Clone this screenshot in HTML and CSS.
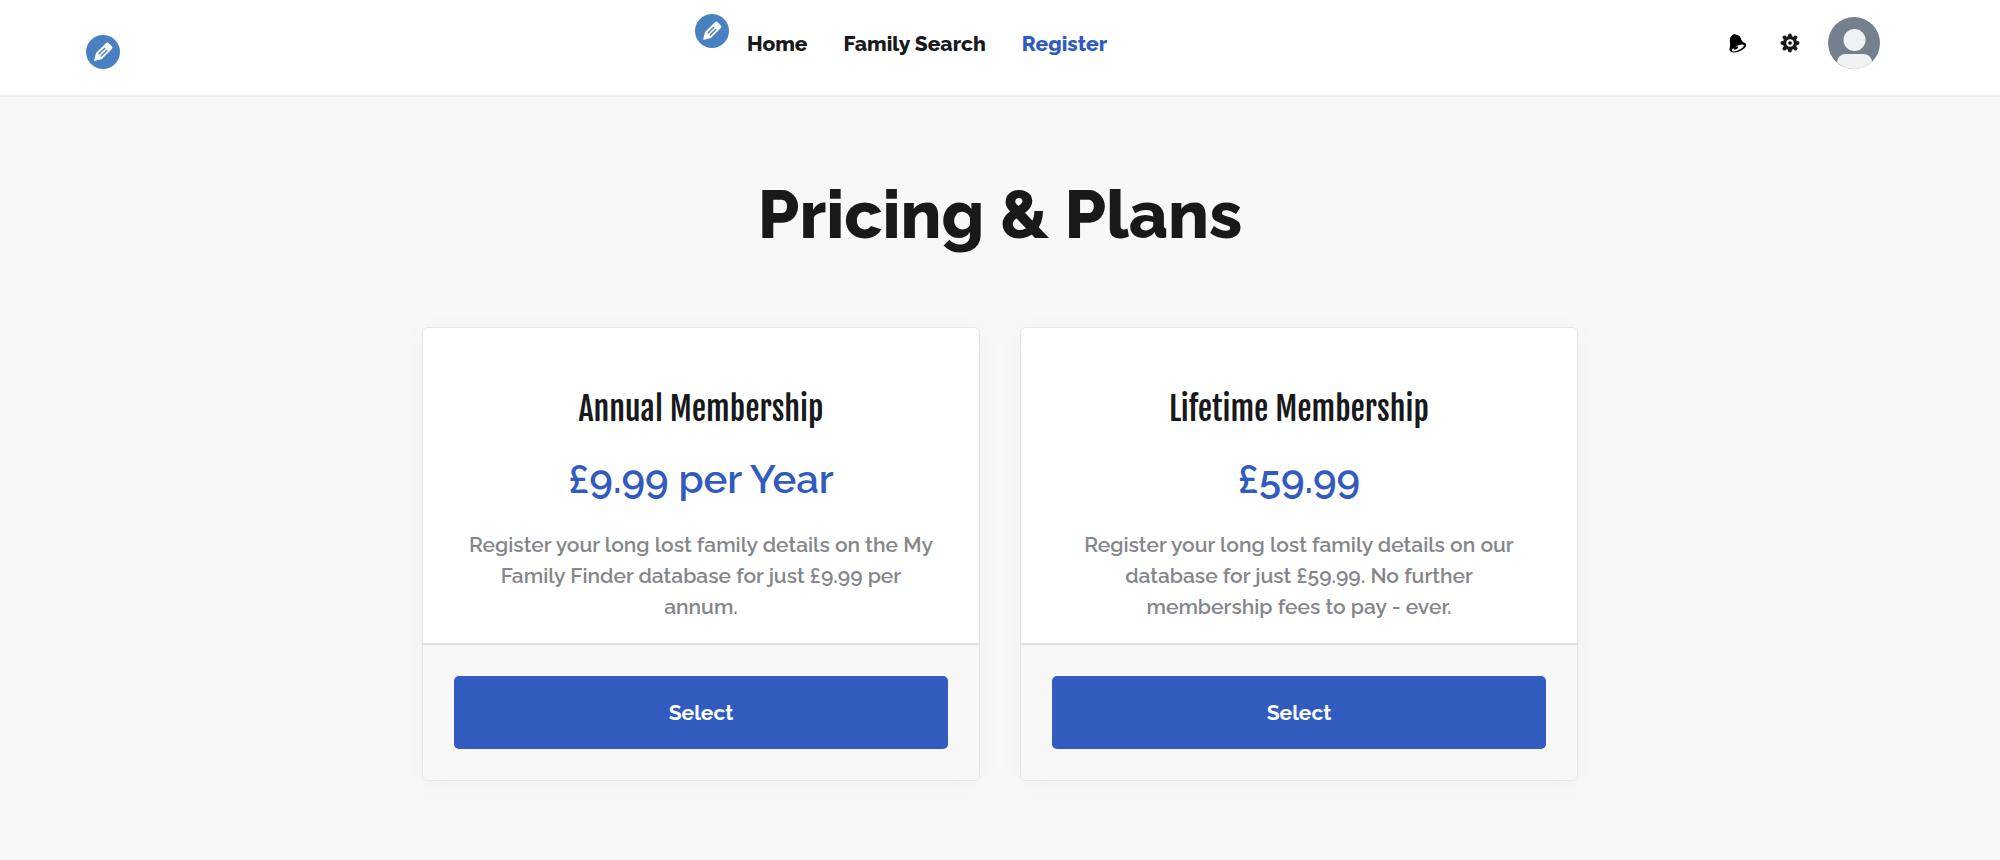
FILE: index.html
```html
<!DOCTYPE html>
<html lang="en">

<head>
    <meta charset="utf-8">
    <meta name="viewport" content="width=device-width, initial-scale=1.0">
    <title>Pricing &amp; Plans</title>
    <link rel="stylesheet" href="styles.css">
</head>

<body>

    <header class="topbar">
        <button class="edit edit-logo" type="button" aria-label="Edit logo">
            <svg viewBox="0 0 34 34">
                <circle cx="17" cy="17" r="17" />
                <g transform="translate(8 26) rotate(-45)">
                    <path class="pen" d="M0 0 L7 -4.2 H21 Q23 -4.2 23 -2.2 V2.2 Q23 4.2 21 4.2 H7 Z" />
                    <path class="line" d="M8 -1.4 H17 M8 1.6 H17" />
                </g>
            </svg>
        </button>

        <nav class="menu">
            <button class="edit edit-menu" type="button" aria-label="Edit menu">
                <svg viewBox="0 0 34 34">
                    <circle cx="17" cy="17" r="17" />
                    <g transform="translate(8 26) rotate(-45)">
                        <path class="pen" d="M0 0 L7 -4.2 H21 Q23 -4.2 23 -2.2 V2.2 Q23 4.2 21 4.2 H7 Z" />
                        <path class="line" d="M8 -1.4 H17 M8 1.6 H17" />
                    </g>
                </svg>
            </button>
            <a href="#">Home</a>
            <a href="#">Family Search</a>
            <a class="active" href="#">Register</a>
        </nav>

        <div class="account">
            <button class="icon" type="button" aria-label="Notifications">
                <svg viewBox="0 0 20 20">
                    <path d="M5 1.4 Q6 .4 7.4 1.4 C11 1.6 12.6 4 13.6 7 Q14.6 9.6 17.6 10.6 Q19.2 12.6 16.4 15.2 C12.6 18.8 6 20.6 2.6 18.6 Q.8 17.2 1.8 14.4 C2.6 11.4 1.4 8.6 2 5.6 Q2.6 2.8 5 1.4 Z" />
                    <ellipse class="hole" cx="9.8" cy="15" rx="6.6" ry="2.3" transform="rotate(-24 9.8 15)" />
                    <ellipse cx="7.8" cy="15" rx="2.6" ry="1.3" transform="rotate(-24 7.8 15)" />
                </svg>
            </button>
            <button class="icon" type="button" aria-label="Settings">
                <svg viewBox="0 0 20 20">
                    <circle class="ring" cx="10" cy="10" r="5.4" />
                    <circle cx="10" cy="10" r="1.8" />
                    <path class="teeth" d="M10 3.4 V2.4 M10 16.6 V17.6 M3.4 10 H2.4 M16.6 10 H17.6 M5.2 5.2 L4.4 4.4 M14.8 5.2 L15.6 4.4 M5.2 14.8 L4.4 15.6 M14.8 14.8 L15.6 15.6" />
                </svg>
            </button>
            <button class="avatar" type="button" aria-label="My account">
                <svg viewBox="0 0 52 52">
                    <circle class="back" cx="26" cy="26" r="26" />
                    <circle class="person" cx="26.5" cy="23" r="11" />
                    <path class="person" d="M9 45.5 Q10 37 18 37 H35 Q43 37 44 45 A26 26 0 0 1 9 45.5 Z" />
                </svg>
            </button>
        </div>
    </header>

    <main class="pricing">
        <h1>Pricing &amp; Plans</h1>

        <section class="plans">
            <article class="plan">
                <div class="plan-body">
                    <h2>Annual Membership</h2>
                    <p class="price">£9.99 per Year</p>
                    <p class="text">Register your long lost family details on the My Family Finder database for just £9.99 per annum.</p>
                </div>
                <div class="plan-footer">
                    <button class="select" type="button">Select</button>
                </div>
            </article>

            <article class="plan">
                <div class="plan-body">
                    <h2>Lifetime Membership</h2>
                    <p class="price">£59.99</p>
                    <p class="text">Register your long lost family details on our database for just £59.99. No further membership fees to pay - ever.</p>
                </div>
                <div class="plan-footer">
                    <button class="select" type="button">Select</button>
                </div>
            </article>
        </section>
    </main>

</body>

</html>
```
FILE: styles.css
```css
* {
    box-sizing: border-box;
}

body {
    margin: 0;
    font-family: Raleway, 'Lato', sans-serif;
    color: #18191b;
    background-color: #f8f8fa;
}

button {
    font-family: inherit;
    border: none;
    padding: 0;
    background: none;
    cursor: pointer;
}

svg {
    display: block;
    width: 100%;
}

/* top bar */
.topbar {
    display: flex;
    justify-content: space-between;
    align-items: center;
    min-height: 97px;
    padding: 14px 120px 23px 86px;
    background-color: #fff;
    border-bottom: 2px solid #efeff2;
}

.edit {
    width: 34px;
    fill: #4880c2;
}

.edit .pen {
    fill: #fff;
}

.edit .line {
    fill: none;
    stroke: #4880c2;
    stroke-width: 1.4;
}

.edit-logo {
    margin-top: 18px;
}

.menu {
    display: flex;
    align-items: center;
}

.edit-menu {
    margin-bottom: 24px;
}

.menu a {
    padding: 0 18px;
    font-size: 21px;
    font-weight: 800;
    color: #18191b;
    text-decoration: none;
}

.menu .active {
    color: #315bbf;
}

.account {
    display: flex;
    align-items: center;
    padding-left: 12px;
}

.icon {
    width: 52px;
    padding: 0 16px;
}

.icon .hole {
    fill: #fff;
}

.icon .ring {
    fill: none;
    stroke: #18191b;
    stroke-width: 3.4;
}

.icon .teeth {
    stroke: #18191b;
    stroke-width: 3.8;
    stroke-linecap: round;
}

.avatar {
    width: 52px;
    margin-left: 12px;
}

.avatar .back {
    fill: #74808e;
}

.avatar .person {
    fill: #f0f1f3;
}

/* pricing */
.pricing {
    max-width: 1196px;
    margin: 0 auto;
    padding: 78px 20px;
}

h1 {
    margin: 0 0 72px;
    font-size: 67px;
    line-height: 80px;
    font-weight: 800;
    text-align: center;
}

.plans {
    display: grid;
    grid-template-columns: repeat(2, 1fr);
    grid-gap: 40px;
}

.plan {
    display: flex;
    flex-direction: column;
    overflow: hidden;
    text-align: center;
    background-color: #fff;
    border: 1px solid #e6e6e8;
    border-radius: 6px;
    box-shadow: 0 4px 24px rgba(0, 0, 0, .04);
}

.plan-body {
    flex: 1;
    padding: 57px 40px 21px;
}

h2 {
    margin: 0 0 20px;
    font-family: 'Fjalla One', 'Liberation Sans Narrow', 'Liberation Sans', sans-serif;
    font-size: 32px;
    line-height: 48px;
    font-weight: 400;
}

.price {
    margin: 0 0 24px;
    font-size: 40px;
    line-height: 52px;
    font-weight: 600;
    color: #315bbf;
}

.text {
    margin: 0;
    font-size: 21px;
    line-height: 31px;
    font-weight: 600;
    color: #85868a;
}

.plan-footer {
    padding: 31px;
    background-color: #f7f7f7;
    border-top: 2px solid #dedfe0;
}

.select {
    width: 100%;
    height: 73px;
    font-size: 21px;
    font-weight: 700;
    color: #fff;
    background-color: #315bbf;
    border-radius: 5px;
}

@media only screen and (max-width: 900px) {
    .topbar {
        padding-left: 20px;
        padding-right: 20px;
    }

    .plans {
        grid-template-columns: 1fr;
    }
}
```
